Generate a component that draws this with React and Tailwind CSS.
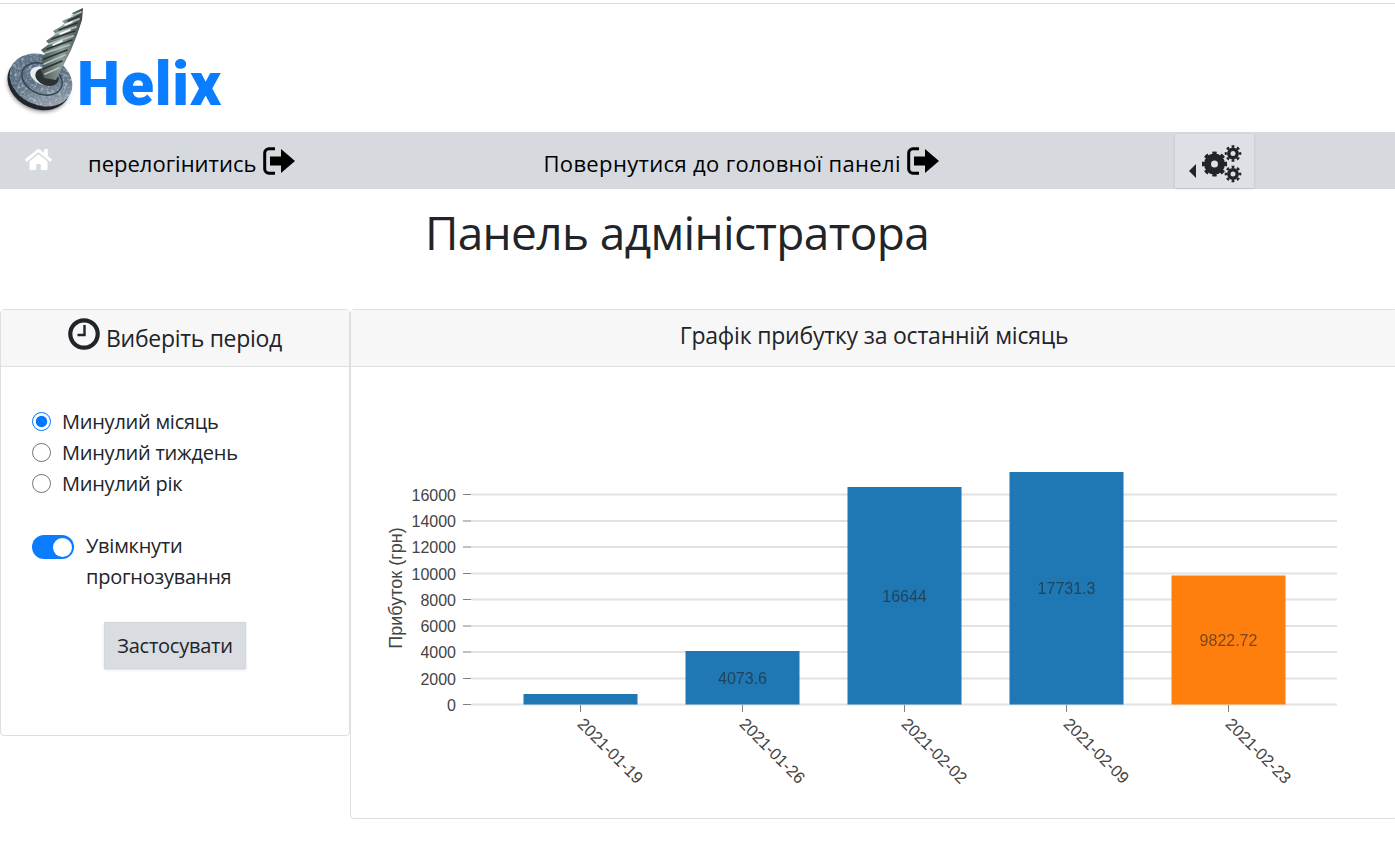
import { FaHome } from "react-icons/fa";

const bars = [
  { x: 523.5, top: 694, label: "", tick: 580.5, date: "2021-01-19", color: "#1f77b4" },
  { x: 685.5, top: 651, label: "4073.6", labelY: 678, tick: 742.5, date: "2021-01-26", color: "#1f77b4" },
  { x: 847.5, top: 487, label: "16644", labelY: 596, tick: 904.5, date: "2021-02-02", color: "#1f77b4" },
  { x: 1009.5, top: 472, label: "17731.3", labelY: 588, tick: 1066.5, date: "2021-02-09", color: "#1f77b4" },
  { x: 1171.5, top: 575.5, label: "9822.72", labelY: 640, tick: 1228.5, date: "2021-02-23", color: "#ff7f0e" },
];

const yTicks = [
  { y: 704.5, v: "0" },
  { y: 678.5, v: "2000" },
  { y: 652, v: "4000" },
  { y: 626, v: "6000" },
  { y: 599.5, v: "8000" },
  { y: 573.5, v: "10000" },
  { y: 547, v: "12000" },
  { y: 521, v: "14000" },
  { y: 494.5, v: "16000" },
];

const LogoutIcon = ({ className }) => (
  <svg viewBox="0 0 32 28" className={className}>
    <path d="M12 1.7H6A4.3 4.3 0 0 0 1.7 6v16A4.3 4.3 0 0 0 6 26.3H12" fill="none" stroke="#000" strokeWidth="3" />
    <path d="M7 9.5h11V2l14 12-14 12v-7.5H7z" fill="#000" />
  </svg>
);

const ClockIcon = () => (
  <svg viewBox="0 0 32 32" className="w-8 h-8 shrink-0 mb-[5px]">
    <circle cx="16" cy="16" r="13.7" fill="none" stroke="#212529" strokeWidth="4.2" />
    <path d="M16.5 7v10H9.5" fill="none" stroke="#212529" strokeWidth="2.4" />
  </svg>
);

const Gear = ({ cx, cy, ring, ringW, teeth, teethW }) => (
  <g fill="none" stroke="#212529">
    <circle cx={cx} cy={cy} r={ring} strokeWidth={ringW} />
    <circle cx={cx} cy={cy} r={teeth} strokeWidth={teethW} pathLength="80" strokeDasharray="5 5" strokeDashoffset="2.5" />
  </g>
);

const CogsIcon = () => (
  <svg viewBox="0 0 40 38" className="w-10 h-[38px] ml-[6px] mt-[7px]">
    <Gear cx={12.5} cy={19} ring={7} ringW={7} teeth={11} teethW={3.2} />
    <Gear cx={31} cy={8.5} ring={4.2} ringW={3.4} teeth={7} teethW={2.6} />
    <Gear cx={31} cy={29} ring={4.2} ringW={3.4} teeth={7} teethW={2.6} />
  </svg>
);

const ScrewLogo = () => (
  <svg viewBox="0 4 86 118" className="w-[86px] h-[118px] shrink-0 -ml-[2px] -mt-[2px]">
    <defs>
      <linearGradient id="washer" x1="0" y1="0" x2="1" y2="1">
        <stop offset="0" stopColor="#5d7186" />
        <stop offset="0.5" stopColor="#5a6d82" />
        <stop offset="0.8" stopColor="#8b98a6" />
        <stop offset="1" stopColor="#aeb6bb" />
      </linearGradient>
      <linearGradient id="thread" x1="0" y1="0" x2="1" y2="0">
        <stop offset="0" stopColor="#4a5654" />
        <stop offset="0.5" stopColor="#8d9d9a" />
        <stop offset="1" stopColor="#3a4543" />
      </linearGradient>
      <filter id="soft">
        <feGaussianBlur stdDeviation="0.4" />
      </filter>
      <filter id="shade">
        <feGaussianBlur stdDeviation="2" />
      </filter>
      <filter id="grain">
        <feTurbulence type="fractalNoise" baseFrequency="0.4" numOctaves="2" seed="4" />
        <feColorMatrix values="0 0 0 0 0.85 0 0 0 0 0.9 0 0 0 0 0.95 0 0 0 1.8 -0.85" />
        <feComposite in2="SourceGraphic" operator="in" />
      </filter>
    </defs>
    <ellipse cx="38" cy="86" rx="31" ry="24" transform="rotate(24 38 86)" fill="#15191b" opacity="0.6" filter="url(#shade)" />
    <g filter="url(#soft)">
      <ellipse cx="39" cy="83" rx="32.5" ry="26" transform="rotate(24 39 83)" fill="#23282a" />
      <ellipse cx="41" cy="80" rx="32.5" ry="25" transform="rotate(24 41 80)" fill="url(#washer)" />
      <ellipse cx="41" cy="80" rx="32.5" ry="25" transform="rotate(24 41 80)" fill="#fff" filter="url(#grain)" />
      <ellipse cx="42" cy="79" rx="21" ry="15" transform="rotate(24 42 79)" fill="none" stroke="#34434f" strokeWidth="1.4" />
      <ellipse cx="43" cy="76" rx="13.5" ry="8.5" transform="rotate(24 43 76)" fill="#e8edf0" />
      <ellipse cx="47" cy="77" rx="12" ry="8.5" transform="rotate(20 47 77)" fill="#2a3033" />
      <path d="M83 8L72 13L74 16L62 21L65 24L53 31L56 34L46 41L49 44L41 50L45 54L41 60L44 64L41 70L44 78L56 80L63 66L71 50L77 35L82 20Z" fill="url(#thread)" />
      <g fill="none" strokeLinecap="round">
        <path d="M72 16L81 12M63 25L79 19M55 34L76 27M49 44L73 36M45 53L69 45M44 64L65 55M45 74L59 68" stroke="#b7c4c1" strokeWidth="1.8" />
        <path d="M68 21L79 16M59 30L77 23M52 39L75 31M47 49L72 40M44 59L67 50M43 69L62 61" stroke="#2a3332" strokeWidth="1.5" />
        <path d="M60 34L70 30M53 45L62 41M65 25L72 22" stroke="#ffffff" strokeWidth="1.5" />
      </g>
    </g>
  </svg>
);

const Radio = ({ label, checked }) => (
  <label className="flex items-center h-[31px]">
    <input type="radio" name="period" defaultChecked={checked} className="w-[19px] h-[19px] mr-[11px] accent-[#0075ff]" />
    <span>{label}</span>
  </label>
);

const Chart = () => (
  <svg viewBox="351 367 1046 451" className="block w-[1046px] h-[451px] font-['Liberation_Sans',sans-serif]">
    {yTicks.map((t) => (
      <g key={t.v}>
        <line x1="471" x2="1337" y1={t.y} y2={t.y} stroke="#e2e2e2" strokeWidth="2" />
        <line x1="463" x2="471" y1={t.y} y2={t.y} stroke="#808080" />
        <text x="456" y={t.y + 6} textAnchor="end" className="fill-[#444] text-[16px]">{t.v}</text>
      </g>
    ))}
    <text transform="translate(402,588) rotate(-90)" textAnchor="middle" className="fill-[#444] text-[18px]">Прибуток (грн)</text>
    {bars.map((b) => (
      <g key={b.date}>
        <rect x={b.x} y={b.top} width="114" height={704.5 - b.top} fill={b.color} />
        <line x1={b.tick} x2={b.tick} y1="705" y2="712" stroke="#808080" />
        {b.label && (
          <text x={b.tick} y={b.labelY + 6} textAnchor="middle" className="fill-[#222] opacity-60 text-[16px]">{b.label}</text>
        )}
        <text transform={`translate(${b.tick - 4},725) rotate(45)`} className="fill-[#444] text-[16.5px]">{b.date}</text>
      </g>
    ))}
  </svg>
);

export default function App() {
  return (
    <div className="w-full h-[849px] overflow-hidden bg-white text-[#212529] text-[20px] font-['Open_Sans',sans-serif]">
      <div className="mt-[3px] border-t border-[#dcdcdc] h-[129px] flex items-start pl-[2px] pt-[2px]">
        <ScrewLogo />
        <span className="mt-[33px] -ml-[9px] text-[61px] leading-[90px] tracking-[0.8px] font-black text-[#0a7cff] font-['Roboto',sans-serif]">Helix</span>
      </div>

      <nav className="h-[57px] bg-[#d6d9dd] flex items-center text-black text-[22px]">
        <FaHome className="ml-[25px] w-[27px] h-[27px] text-white -mt-[2px]" />
        <a className="ml-[36px] flex items-center">
          <span className="pt-[6px]">перелогінитись</span>
          <LogoutIcon className="ml-[7px] w-8 h-7" />
        </a>
        <a className="ml-[248px] flex items-center tracking-[0.35px]">
          <span className="pt-[6px]">Повернутися до головної панелі</span>
          <LogoutIcon className="ml-[6px] w-8 h-7" />
        </a>
        <button className="ml-[236px] w-[79px] h-[54px] bg-[#dde0e4] shadow-sm flex items-center pl-[14px]">
          <span className="border-y-[7px] border-y-transparent border-r-[7px] border-r-[#212529] mt-[20px]" />
          <CogsIcon />
        </button>
      </nav>

      <div className="h-[120px] pr-[41px] text-center">
        <h1 className="pt-[7px] text-[46px] leading-[72px] font-normal tracking-[-0.65px]">Панель адміністратора</h1>
      </div>

      <div className="flex items-start w-[1398px]">
        <section className="w-[350px] h-[427px] border border-[#dfdfdf] rounded-[4px]">
          <header className="h-[57px] bg-[#f7f7f7] border-b border-[#dfdfdf] flex items-end justify-center gap-[6px] pb-[11px] text-[23px] leading-[33px] tracking-[-0.3px]">
            <ClockIcon />
            <span>Виберіть період</span>
          </header>
          <div className="pl-[31px] pt-[39px] tracking-[-0.25px]">
            <Radio label="Минулий місяць" checked />
            <Radio label="Минулий тиждень" />
            <Radio label="Минулий рік" />
            <div className="flex items-start mt-[32px] leading-[31px]">
              <span className="mt-[4px] w-[42px] h-6 shrink-0 rounded-full bg-[#0a7cff] flex items-center justify-end pr-[2px]">
                <span className="w-[19px] h-[19px] rounded-full bg-white" />
              </span>
              <span className="ml-3 w-[200px] -mt-px">Увімкнути прогнозування</span>
            </div>
            <button className="block ml-[72px] mt-[30px] w-[142px] h-[47px] bg-[#d9dce0] border border-[#d3d6da] shadow-sm">Застосувати</button>
          </div>
        </section>

        <section className="w-[1048px] h-[510px] border border-[#dfdfdf] rounded-[4px]">
          <header className="h-[57px] bg-[#f7f7f7] border-b border-[#dfdfdf] flex items-center justify-center pb-[5px] text-[23px] tracking-[-0.2px]">
            Графік прибутку за останній місяць
          </header>
          <Chart />
        </section>
      </div>
    </div>
  );
}
